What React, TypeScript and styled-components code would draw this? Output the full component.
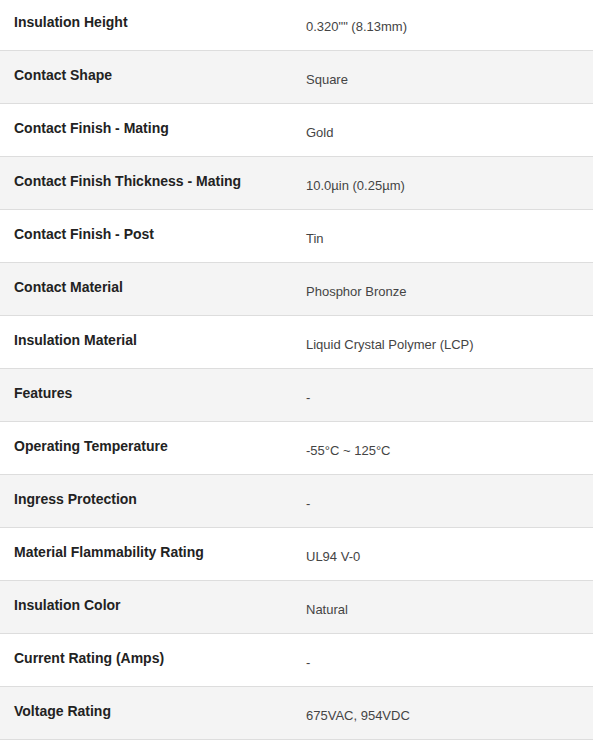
import React from "react";
import styled, { createGlobalStyle } from "styled-components";

const Global = createGlobalStyle`
  html, body { margin: 0; padding: 0; background: #fff; }
  body { font-family: "Liberation Sans", Arial, sans-serif; }
`;

const Table = styled.div`
  display: flex;
  flex-direction: column;
  width: 593px;
  margin-top: -2px;
`;

const Row = styled.div<{ $shaded: boolean }>`
  display: grid;
  grid-template-columns: 292px 1fr;
  min-height: 52px;
  box-sizing: content-box;
  background: ${(p) => (p.$shaded ? "#f4f4f4" : "#ffffff")};
  border-bottom: 1px solid #dddddd;
`;

const Label = styled.div`
  padding: 16px 14px 0 14px;
  font-size: 14px;
  font-weight: bold;
  color: #222;
  line-height: 16px;
`;

const Value = styled.div`
  padding: 21px 14px 0 14px;
  font-size: 13px;
  color: #444;
  line-height: 15px;
`;

const rows: [string, string][] = [
  ["Insulation Height", "0.320\"\" (8.13mm)"],
  ["Contact Shape", "Square"],
  ["Contact Finish - Mating", "Gold"],
  ["Contact Finish Thickness - Mating", "10.0µin (0.25µm)"],
  ["Contact Finish - Post", "Tin"],
  ["Contact Material", "Phosphor Bronze"],
  ["Insulation Material", "Liquid Crystal Polymer (LCP)"],
  ["Features", "-"],
  ["Operating Temperature", "-55°C ~ 125°C"],
  ["Ingress Protection", "-"],
  ["Material Flammability Rating", "UL94 V-0"],
  ["Insulation Color", "Natural"],
  ["Current Rating (Amps)", "-"],
  ["Voltage Rating", "675VAC, 954VDC"],
];

export default function App() {
  return (
    <>
      <Global />
      <Table>
        {rows.map(([k, v], i) => (
          <Row key={k} $shaded={i % 2 === 1}>
            <Label>{k}</Label>
            <Value>{v}</Value>
          </Row>
        ))}
      </Table>
    </>
  );
}
